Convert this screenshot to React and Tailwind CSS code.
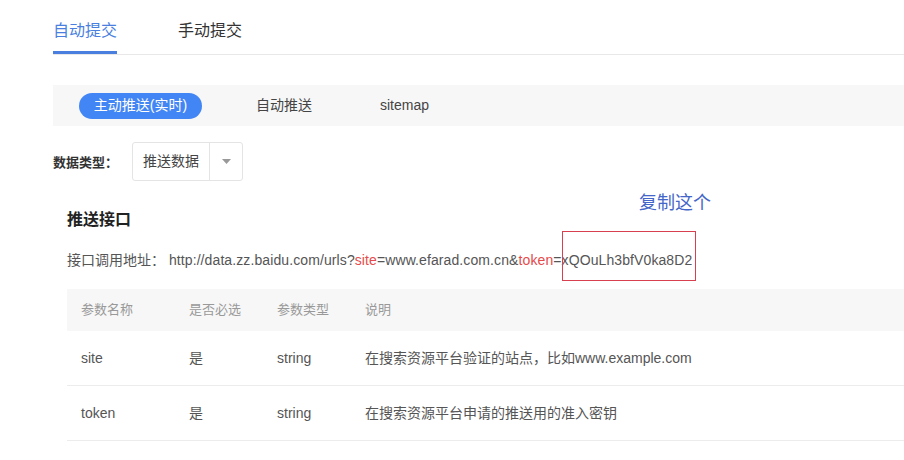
import React from 'react';

const font = { fontFamily: '"Liberation Sans", "Noto Sans CJK SC", sans-serif' };

const rows = [
    { name: 'site', required: '是', type: 'string', desc: '在搜索资源平台验证的站点，比如www.example.com' },
    { name: 'token', required: '是', type: 'string', desc: '在搜索资源平台申请的推送用的准入密钥' },
];

export default function App() {
    return (
        <div className="relative w-[904px] h-[460px] overflow-hidden bg-white text-[#555]" style={font}>
            {/* Top tabs */}
            <div className="ml-[53px] flex h-[55px] items-end border-b border-[#e8e8e8]">
                <div className="w-[64px] border-b-[3px] border-[#4a7fe0] pb-[10px] text-[16px] leading-[20px] text-[#4a7fe0]">
                    自动提交
                </div>
                <div className="ml-[61px] pb-[13px] text-[16px] leading-[20px] text-[#333]">手动提交</div>
            </div>

            {/* Sub tabs */}
            <div className="ml-[53px] mt-[30px] flex h-[41px] items-center bg-[#f7f7f7] pl-[26px] text-[14px]">
                <div className="flex h-[26px] w-[123px] items-center justify-center rounded-full bg-[#4285f4] text-white">
                    主动推送(实时)
                </div>
                <div className="ml-[54px] text-[#444]">自动推送</div>
                <div className="ml-[68px] text-[#444]">sitemap</div>
            </div>

            {/* Data type */}
            <div className="ml-[53px] mt-[16px] flex items-center">
                <span className="pt-[2px] text-[13px] font-bold text-[#333]">数据类型：</span>
                <div className="ml-[14px] flex h-[39px] w-[111px] items-stretch rounded-[3px] border border-[#e4e4e4] text-[14px] text-[#444]">
                    <div className="flex w-[76px] items-center pl-[10px]">推送数据</div>
                    <div className="flex flex-1 items-center justify-center border-l border-[#e4e4e4]">
                        <svg width="9" height="5" viewBox="0 0 9 5">
                            <path d="M0 0h9L4.5 5z" fill="#999" />
                        </svg>
                    </div>
                </div>
            </div>

            {/* Push API */}
            <div className="ml-[67px]">
                <div className="mt-[28px] text-[16px] font-bold leading-[22px] text-[#222]">推送接口</div>
                <div className="mt-[19px] text-[14px] leading-[20px] text-[#555]">
                    接口调用地址：{' '}
                    <span className="tracking-[0.1px]">
                        http://data.zz.baidu.com/urls?
                        <span className="text-[#e54b4b]">site</span>=www.efarad.com.cn&amp;
                        <span className="text-[#e54b4b]">token</span>=xQOuLh3bfV0ka8D2
                    </span>
                </div>

                {/* Table */}
                <div className="mt-[19px] text-[13px]">
                    <div className="flex h-[42px] items-center bg-[#f7f7f7] text-[#999]">
                        <div className="w-[122px] pl-[14px]">参数名称</div>
                        <div className="w-[88px]">是否必选</div>
                        <div className="w-[88px]">参数类型</div>
                        <div>说明</div>
                    </div>
                    {rows.map((row) => (
                        <div key={row.name} className="flex h-[55px] items-center border-b border-[#ececec] text-[14px] text-[#555]">
                            <div className="w-[122px] pl-[14px]">{row.name}</div>
                            <div className="w-[88px]">{row.required}</div>
                            <div className="w-[88px]">{row.type}</div>
                            <div>{row.desc}</div>
                        </div>
                    ))}
                </div>
            </div>

            {/* Annotation */}
            <div className="absolute left-[639px] top-[190px] text-[18px] text-[#4466c8]">复制这个</div>
            <div className="absolute left-[562px] top-[231px] h-[50px] w-[134px] border border-[#d7404f]" />
        </div>
    );
}
